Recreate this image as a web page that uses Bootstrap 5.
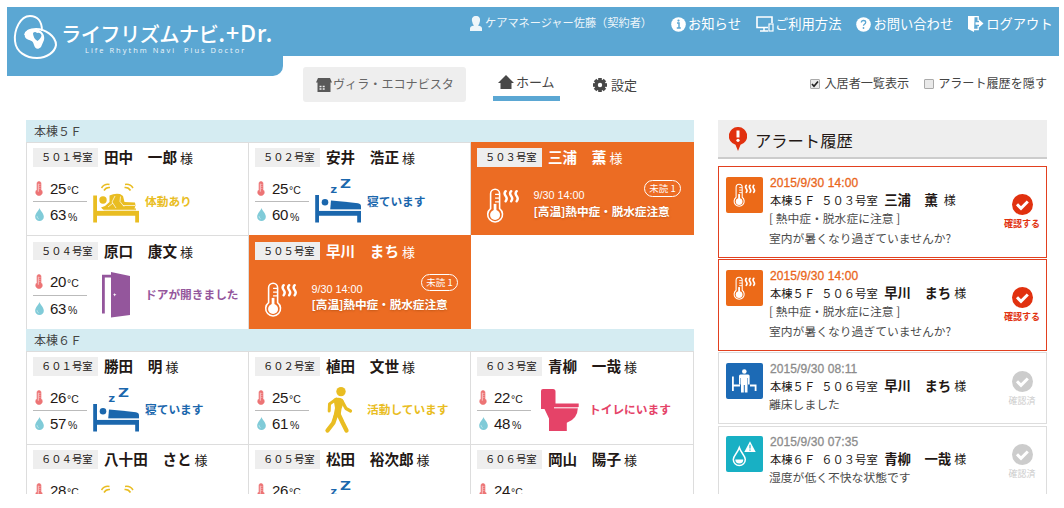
<!DOCTYPE html>
<html lang="ja">
<head>
<meta charset="utf-8">
<meta name="viewport" content="width=device-width, initial-scale=1">
<title>ライフリズムナビ.+Dr.</title>
<link href="https://cdn.jsdelivr.net/npm/bootstrap@5.3.0/dist/css/bootstrap.min.css" rel="stylesheet">
<style>
body{width:1064px;height:508px;font-family:"Noto Sans CJK JP",sans-serif;color:#231815;line-height:1;background:#fff}
svg{display:block;flex:none}
.num{font-family:"Liberation Sans",Arial,sans-serif}
.top-area{padding:7px 5px 0 7px;height:120px}
.brand-box{width:276px;height:69px;border-bottom-right-radius:10px;padding:7px 0 0 6px}
.blue{background:#5ba7d3;color:#fff}
.top-right{width:776px}
.bar-blue{height:49px;padding:0 0 0 187px;white-space:nowrap}
.bar-blue .item{font-size:13.3px;height:34px}
.bar-blue .user{font-size:11.2px;opacity:.9;height:32px}
.brand-text{padding-top:6px;margin-left:3px}
.brand-name{font-size:20.4px;font-weight:500;letter-spacing:-.75px;line-height:24px;white-space:nowrap}
.brand-latin{font-size:23px;letter-spacing:.9px}
.brand-sub{font-family:"Open Sans",sans-serif;font-size:7.5px;letter-spacing:2px;line-height:9px;padding:1px 0 0 24px;white-space:pre;opacity:.9}
.tabs-row{padding:11px 12px 0 20px;color:#444}
.villa{width:163px;height:35px;background:#eee;border-radius:3px;font-size:12.1px;color:#666;padding-left:13px}
.tab-home{width:67px;height:34px;border-bottom:5px solid #5ba7d3;margin-left:27px;font-size:13px;padding-left:5px}
.tab-set{margin-left:33px;font-size:13px;height:35px}
.opt{font-size:12.1px;height:33px}
.tick{width:10px;height:10px;border:1px solid #aaa;background:#e9e9e9;border-radius:1px}
.page-body{padding:0 17px 0 26px;height:374px;overflow:hidden}
.rooms{width:668px}
.floor{height:22.2px;background:#d5ecf2;font-size:12px;color:#444;padding:0 8px;line-height:22px;word-spacing:-1px}
.grid-rooms{display:grid;grid-template-columns:222px 222px 223px;grid-auto-rows:93.3px;border-left:1px solid #ddd;width:668px}
.room{border-right:1px solid #ddd;border-top:1px solid #ddd;padding:5.2px 0 0 6px}
.room-no{width:65px;height:18.5px;background:#eee;color:#231815;font-size:10.3px;padding-left:8px;line-height:18px}
.who{font-size:14.6px;font-weight:700;margin-left:6px;line-height:17px}
.sama{font-size:13px;margin-left:3px;line-height:19px}
.env{width:54px;margin-top:8px}
.env .val{height:26px;padding-left:2px}
.env .val+.val{border-top:1px solid #bbb}
.env b{font-weight:400;font-size:15px;letter-spacing:-.3px;margin-left:7px}
.env .val+.val b{margin-left:6px}
.env small{font-size:10.5px;padding-top:4px;margin-left:1px}
.env .val+.val small{margin-left:2px}
.state{height:50px;margin-top:9px}
.lab{font-size:11.7px;font-weight:700;white-space:nowrap;padding-bottom:2px}
.c-y{color:#e9bd22}.c-b{color:#1b67ad}.c-p{color:#94569c}.c-r{color:#e54368}
.hot{background:#ec6c23;border-color:#ec6c23;color:#fff}
.hot-body{padding:14px 12px 0 8.5px}
.hot-body svg{margin-top:7px}
.clock{font-size:10.8px;padding-top:9px}
.pill{border:1px solid #fff;border-radius:9px;width:37px;height:17px;font-size:9.5px;line-height:14px;margin-top:-1px}
.msg{font-size:11.7px;font-weight:700;text-shadow:0 1px 2px #a348108c;letter-spacing:-.1px;white-space:nowrap;padding-top:4px}
.logs{width:329px;margin-left:24px}
.logs-head{height:39px;background:#eee;border-bottom:2px solid #ccc;padding-left:11px;font-size:16.3px;margin-bottom:7px}
.log{height:71.5px;border:1px solid #ddd;margin-bottom:2px;padding:9.5px 6px 0 7px}
.log.new{height:91.5px;border-color:#e2401f;margin-bottom:1.5px}
.tile{width:37px;height:36px;border-radius:2px;color:#fff;flex:none}
.when{font-size:12px;letter-spacing:.1px;height:14px;line-height:13px;color:#8c8c8c;-webkit-text-stroke:.3px}
.new .when{color:#ea661b}
.place{font-size:11.3px;word-spacing:3.5px;line-height:17px;height:17px;white-space:nowrap}
.place b{font-size:13.4px;margin:0 3px 0 6.5px}
.place .sm{font-size:12px}
.note{font-size:11.8px;color:#4b4b4b;line-height:20px;white-space:nowrap;margin-left:-1px}
.ack{width:36px;font-size:9px;color:#ccc}
.new .ack{color:#e1310f;font-weight:700}
</style>
</head>
<body class="overflow-hidden">
<svg width="0" height="0" class="position-absolute">
<defs>
<symbol id="temp" viewBox="0 0 8 14"><path d="M2 2a2 2 0 0 1 4 0v6.2a3.3 3.3 0 1 1-4 0z" fill="#ed7475" stroke="#ed7475" stroke-width=".6"/><path d="M3.3 2.2v8M4.5 3h.8M4.5 5h.8M4.5 7h.8" stroke="#fff" stroke-width=".6"/></symbol>
<symbol id="drop" viewBox="0 0 8 12"><path d="M4 0C5 3 8 5 8 8a4 4 0 0 1-8 0C0 5 3 3 4 0z" fill="#80cbd8"/><path d="M1.7 7.5q0 2 1.6 2.5" stroke="#c3e7ed" fill="none" stroke-width=".8"/></symbol>
<symbol id="sleep" viewBox="0 0 58 50"><g fill="#1b67ad"><path d="M6.2 19H10v15.7h42v11.8h-3.8v-6.7H10v6.7H6.2z"/><circle cx="16" cy="26.3" r="3.3"/><path d="M22 24.6q14 1 27 2.6 3 .6 3 3v3.3H21.2z"/><text x="21.4" y="17.4" font-family="Open Sans,sans-serif" font-weight="700" font-size="11" textLength="6.5" lengthAdjust="spacingAndGlyphs">z</text><text x="31.3" y="12" font-family="Open Sans,sans-serif" font-weight="700" font-size="12" textLength="10.5" lengthAdjust="spacingAndGlyphs">Z</text></g><path d="M10 34.2h42" stroke="#fff"/></symbol>
<symbol id="move" viewBox="0 0 58 50"><g fill="#e9bd22"><path d="M6.2 19.5H10v15.2h42v11.8h-3.8v-6.7H10v6.7H6.2z"/><circle cx="16" cy="24" r="3.7"/><path d="M18 30l4.500-4V19.500q5-2.500 10.500-1.500l3 2 1.500 6 10.500.5.500 3-1 3H49v2H17l-3-3z"/></g><path d="M21 31l5-4M28 20l-3 6 4 6M33.500 20.500l-.5 5 4 5M36 29.500h12M10 34.200h42" stroke="#fff" stroke-width=".7" fill="none"/><path d="M14.500 12q3-4.500 8-3.500M17 14.500q2-3.500 6-3M46 12q-3-4.500-8-3.500M43.500 14.500q-2-3.500-6-3" stroke="#e9bd22" stroke-width="1.600" fill="none"/></symbol>
<symbol id="door" viewBox="0 0 58 50"><path d="M15 4.700h9v2.800h-6.200v36H15zM24 2l19 4v39l-19 2.500z" fill="#94569c"/><path d="M27.700 23l.5 1.300 1.300.5-1.300.5-.5 1.300-.5-1.300-1.300-.5 1.300-.5z" fill="#fff"/></symbol>
<symbol id="walk" viewBox="0 0 58 50"><g fill="none" stroke="#e9bd22" stroke-linecap="round" stroke-linejoin="round"><path d="M27.500 14L20.500 19 20.200 26" stroke-width="3"/><path d="M33 16l4 7.500 4.500 2.500" stroke-width="3.200"/><path d="M26.500 31.500L24.300 38 18.500 45.500" stroke-width="4.300"/><path d="M29.500 29l4 8.500 4 8" stroke-width="4.300"/></g><circle cx="32" cy="6.600" r="4.700" fill="#e9bd22"/><path d="M24.500 14q5-2.500 9 0l1.500 3-2.500 7-1.200 8.500-7-.5 1.700-9z" fill="#e9bd22"/></symbol>
<symbol id="toilet" viewBox="0 0 58 50"><path d="M10 6q0-2 2-2h10q2.500 0 2.500 2.500v12h23.200v3.800H47q-.5 12-11.200 15.500V46H18V33.500L13.500 24H10z" fill="#e54368"/><path d="M23 22.800h25" stroke="#fff" stroke-width="1"/></symbol>
<symbol id="heat" viewBox="0 0 32 34"><g fill="none" stroke="currentColor"><path d="M4.300 19.500V5.500a4 4 0 0 1 8.500 0v14a7 7 0 1 1-8.500 0z" stroke-width="1.500"/><path d="M12.500 6H8.500M12.500 9.500H8.500M12.500 13H8.500" stroke-width="1.200"/><path d="M8.500 15v10" stroke-width="2.600"/><g stroke-width="2.300" stroke-linecap="round"><path d="M18.500 3q-2 2 0 4.500t0 5M23.700 3q-2 2 0 4.500t0 5M28.900 3q-2 2 0 4.500t0 5"/></g></g><circle cx="8.500" cy="25.500" r="4.700" fill="currentColor"/></symbol>
<symbol id="check" viewBox="0 0 21 21"><circle cx="10.500" cy="10.500" r="10.500" fill="currentColor"/><path d="M5 10.300l4 4L15.800 7.500" stroke="#fff" stroke-width="3" fill="none"/></symbol>
</defs>
</svg>

<header class="top-area d-flex">
  <div class="brand-box blue d-flex">
    <svg width="45" height="46" viewBox="0 0 45 46" fill="none" stroke="#fff" stroke-width="2"><path d="M29 17C29 7 24 2 17 2 7 2 1 16 2 27c1 11 11 17 22 17 10 0 18-6 19-13 0-9-11-16-20-16-6 0-10 2-11 6"/><path d="M12 20c1-5 8-6 14-4 4 2 6 6 5 10l-3 7c-3 3-6 2-7-2-1-4-2-4-5-5-3-1-5-3-4-6z" fill="#fff" stroke="none"/><path d="M20 19q2-2 4 0 3-1 4.500 2 0 3-4 6-4.500-3-4.500-8z" fill="#5ba7d3" stroke="none"/></svg>
    <div class="brand-text">
      <div class="brand-name">ライフリズムナビ<span class="brand-latin">.+Dr.</span></div>
      <div class="brand-sub">Life Rhythm Navi  Plus Doctor</div>
    </div>
  </div>
  <div class="top-right">
    <nav class="bar-blue blue d-flex">
      <div class="user d-flex align-items-center"><svg width="12" height="15" viewBox="0 0 12 15" fill="#fff"><path d="M6 0c3 0 4.500 2 4 5q-.5 3-2 4.500 4 .5 4 3V15H0v-2.500q0-2.500 4-3Q2.500 8 2 5C1.500 2 3 0 6 0z"/></svg><span style="padding-left:3px">ケアマネージャー佐藤（契約者）</span></div>
      <div class="item d-flex align-items-center" style="margin-left:19px"><svg width="15" height="15" viewBox="0 0 15 15"><circle cx="7.500" cy="7.500" r="7.300" fill="#fff"/><path d="M6 6h2v5M5.800 11h4" stroke="#5ba7d3" stroke-width="1.500" fill="none"/><circle cx="7.500" cy="3.600" r="1.100" fill="#5ba7d3"/></svg><span style="margin-left:2px">お知らせ</span></div>
      <div class="item d-flex align-items-center" style="margin-left:15px"><svg width="18" height="16" viewBox="0 0 18 16" fill="none" stroke="#fff"><path d="M12 11.500H1V1h15v6" stroke-width="1.600"/><path d="M8 12v2.500M4 15h8" stroke-width="1.500"/><rect x="13" y="8" width="4" height="7" stroke-width="1.200"/></svg><span style="margin-left:1px">ご利用方法</span></div>
      <div class="item d-flex align-items-center" style="margin-left:15px"><svg width="15" height="15" viewBox="0 0 15 15"><circle cx="7.500" cy="7.500" r="7.300" fill="#fff"/><path d="M5.300 5.500q.2-2 2.200-2 2.200 0 2.200 1.800 0 1.200-1.300 1.900-.9.600-.9 1.600" stroke="#5ba7d3" stroke-width="1.300" fill="none"/><circle cx="7.500" cy="11" r=".9" fill="#5ba7d3"/></svg><span style="margin-left:2px">お問い合わせ</span></div>
      <div class="item d-flex align-items-center" style="margin-left:15px"><svg width="16" height="16" viewBox="0 0 16 16"><path d="M0 0h6.500v3L6 16 0 13z" fill="#fff"/><path d="M3 .7h7.200V5M6 13.500h4.200V10" fill="none" stroke="#fff" stroke-width="1.300"/><path d="M7.500 6.300h3.500V3.500L15.500 7.500 11 11.500V8.700H7.500z" fill="#fff"/></svg><span style="margin-left:2px">ログアウト</span></div>
    </nav>
    <div class="tabs-row d-flex">
      <div class="villa d-flex align-items-center"><svg width="16" height="14" viewBox="0 0 16 14" fill="#595959"><path d="M2 0h12l2 4.500H0zM1.500 4.500h13V14h-13z"/><path d="M3.500 8.500h2M6.700 8.500h2M3.500 11h2M6.700 11h2" stroke="#eee" stroke-width="1.300"/></svg><span style="margin-left:1px">ヴィラ・エコナビスタ</span></div>
      <div class="tab-home d-flex align-items-center"><svg width="16" height="14" viewBox="0 0 16 14" fill="#484848"><path d="M8 0l8 8h-2.500v6h-11V8H0z"/></svg><span style="margin-left:2px">ホーム</span></div>
      <div class="tab-set d-flex align-items-center"><svg width="14" height="14" viewBox="-7 -7 14 14"><g fill="#484848"><circle r="5.600"/><path id="tooth" d="M-1.800-7h3.600v14h-3.600z"/><use href="#tooth" transform="rotate(45)"/><use href="#tooth" transform="rotate(90)"/><use href="#tooth" transform="rotate(135)"/></g><circle r="2.200" fill="#fff"/></svg><span style="margin-left:4px">設定</span></div>
      <div class="opt d-flex align-items-center ms-auto"><span class="tick"><svg width="8" height="8" viewBox="0 0 8 8"><path d="M1 4l2 2.300L7 1.500" stroke="#222" stroke-width="1.700" fill="none"/></svg></span><span class="ms-1">入居者一覧表示</span></div>
      <div class="opt d-flex align-items-center" style="margin-left:15px"><span class="tick"></span><span class="ms-1">アラート履歴を隠す</span></div>
    </div>
  </div>
</header>

<main class="page-body d-flex">
  <section class="rooms">
    <div class="floor">本棟５Ｆ</div>
    <div class="grid-rooms">
      <div class="room">
        <div class="d-flex"><span class="room-no">５０１号室</span><span class="who">田中　一郎</span><span class="sama">様</span></div>
        <div class="d-flex"><div class="env"><div class="val d-flex align-items-center"><svg width="8" height="15"><use href="#temp"/></svg><b class="num">25</b><small class="num">°C</small></div><div class="val d-flex align-items-center"><svg width="9" height="13"><use href="#drop"/></svg><b class="num">63</b><small class="num">%</small></div></div><div class="state d-flex align-items-center c-y"><svg width="58" height="50"><use href="#move"/></svg><span class="lab">体動あり</span></div></div>
      </div>
      <div class="room">
        <div class="d-flex"><span class="room-no">５０２号室</span><span class="who">安井　浩正</span><span class="sama">様</span></div>
        <div class="d-flex"><div class="env"><div class="val d-flex align-items-center"><svg width="8" height="15"><use href="#temp"/></svg><b class="num">25</b><small class="num">°C</small></div><div class="val d-flex align-items-center"><svg width="9" height="13"><use href="#drop"/></svg><b class="num">60</b><small class="num">%</small></div></div><div class="state d-flex align-items-center c-b"><svg width="58" height="50"><use href="#sleep"/></svg><span class="lab">寝ています</span></div></div>
      </div>
      <div class="room hot">
        <div class="d-flex"><span class="room-no">５０３号室</span><span class="who">三浦　薫</span><span class="sama">様</span></div>
        <div class="hot-body d-flex"><svg width="34" height="36" viewBox="0 0 32 34"><use href="#heat"/></svg><div class="flex-grow-1" style="margin-left:14px"><div class="d-flex align-items-start justify-content-between"><span class="num clock">9/30 14:00</span><span class="pill text-center">未読 1</span></div><div class="msg">[高温]熱中症・脱水症注意</div></div></div>
      </div>
      <div class="room">
        <div class="d-flex"><span class="room-no">５０４号室</span><span class="who">原口　康文</span><span class="sama">様</span></div>
        <div class="d-flex"><div class="env"><div class="val d-flex align-items-center"><svg width="8" height="15"><use href="#temp"/></svg><b class="num">20</b><small class="num">°C</small></div><div class="val d-flex align-items-center"><svg width="9" height="13"><use href="#drop"/></svg><b class="num">63</b><small class="num">%</small></div></div><div class="state d-flex align-items-center c-p"><svg width="58" height="50"><use href="#door"/></svg><span class="lab">ドアが開きました</span></div></div>
      </div>
      <div class="room hot">
        <div class="d-flex"><span class="room-no">５０５号室</span><span class="who">早川　まち</span><span class="sama">様</span></div>
        <div class="hot-body d-flex"><svg width="34" height="36" viewBox="0 0 32 34"><use href="#heat"/></svg><div class="flex-grow-1" style="margin-left:14px"><div class="d-flex align-items-start justify-content-between"><span class="num clock">9/30 14:00</span><span class="pill text-center">未読 1</span></div><div class="msg">[高温]熱中症・脱水症注意</div></div></div>
      </div>
    </div>
    <div class="floor">本棟６Ｆ</div>
    <div class="grid-rooms">
      <div class="room">
        <div class="d-flex"><span class="room-no">６０１号室</span><span class="who">勝田　明</span><span class="sama">様</span></div>
        <div class="d-flex"><div class="env"><div class="val d-flex align-items-center"><svg width="8" height="15"><use href="#temp"/></svg><b class="num">26</b><small class="num">°C</small></div><div class="val d-flex align-items-center"><svg width="9" height="13"><use href="#drop"/></svg><b class="num">57</b><small class="num">%</small></div></div><div class="state d-flex align-items-center c-b"><svg width="58" height="50"><use href="#sleep"/></svg><span class="lab">寝ています</span></div></div>
      </div>
      <div class="room">
        <div class="d-flex"><span class="room-no">６０２号室</span><span class="who">植田　文世</span><span class="sama">様</span></div>
        <div class="d-flex"><div class="env"><div class="val d-flex align-items-center"><svg width="8" height="15"><use href="#temp"/></svg><b class="num">25</b><small class="num">°C</small></div><div class="val d-flex align-items-center"><svg width="9" height="13"><use href="#drop"/></svg><b class="num">61</b><small class="num">%</small></div></div><div class="state d-flex align-items-center c-y"><svg width="58" height="50"><use href="#walk"/></svg><span class="lab">活動しています</span></div></div>
      </div>
      <div class="room">
        <div class="d-flex"><span class="room-no">６０３号室</span><span class="who">青柳　一哉</span><span class="sama">様</span></div>
        <div class="d-flex"><div class="env"><div class="val d-flex align-items-center"><svg width="8" height="15"><use href="#temp"/></svg><b class="num">22</b><small class="num">°C</small></div><div class="val d-flex align-items-center"><svg width="9" height="13"><use href="#drop"/></svg><b class="num">48</b><small class="num">%</small></div></div><div class="state d-flex align-items-center c-r"><svg width="58" height="50"><use href="#toilet"/></svg><span class="lab">トイレにいます</span></div></div>
      </div>
      <div class="room">
        <div class="d-flex"><span class="room-no">６０４号室</span><span class="who">八十田　さと</span><span class="sama">様</span></div>
        <div class="d-flex"><div class="env"><div class="val d-flex align-items-center"><svg width="8" height="15"><use href="#temp"/></svg><b class="num">28</b><small class="num">°C</small></div></div><div class="state d-flex align-items-center"><svg width="58" height="50"><use href="#move"/></svg></div></div>
      </div>
      <div class="room">
        <div class="d-flex"><span class="room-no">６０５号室</span><span class="who">松田　裕次郎</span><span class="sama">様</span></div>
        <div class="d-flex"><div class="env"><div class="val d-flex align-items-center"><svg width="8" height="15"><use href="#temp"/></svg><b class="num">26</b><small class="num">°C</small></div></div><div class="state d-flex align-items-center"><svg width="58" height="50"><use href="#sleep"/></svg></div></div>
      </div>
      <div class="room">
        <div class="d-flex"><span class="room-no">６０６号室</span><span class="who">岡山　陽子</span><span class="sama">様</span></div>
        <div class="d-flex"><div class="env"><div class="val d-flex align-items-center"><svg width="8" height="15"><use href="#temp"/></svg><b class="num">24</b><small class="num">°C</small></div></div></div>
      </div>
    </div>
  </section>

  <aside class="logs">
    <div class="logs-head d-flex align-items-center"><svg width="18" height="24" viewBox="0 0 18 24"><path d="M9 0a9 9 0 0 1 2.500 17.700L9 24 6.500 17.700A9 9 0 0 1 9 0z" fill="#e1310f"/><path d="M9 3.500v7" stroke="#fff" stroke-width="3"/><circle cx="9" cy="13.300" r="1.600" fill="#fff"/></svg><span class="ps-2 pt-1">アラート履歴</span></div>
    <div class="log new d-flex">
      <div class="tile" style="background:#ec6a18"><svg width="37" height="36" viewBox="0 0 37 36"><use href="#heat" x="7" y="6" width="23" height="25"/></svg></div>
      <div class="flex-grow-1" style="margin-left:7px"><div class="when num">2015/9/30 14:00</div><div class="place">本棟５Ｆ ５０３号室<b>三浦　薫</b><span class="sm" style="margin-left:3px">様</span></div><div class="note">[ 熱中症・脱水症に注意 ]<br>室内が暑くなり過ぎていませんか?</div></div>
      <div class="ack d-flex flex-column align-items-center" style="padding-top:17px"><svg width="21" height="21"><use href="#check"/></svg><span class="mt-1 text-nowrap">確認する</span></div>
    </div>
    <div class="log new d-flex">
      <div class="tile" style="background:#ec6a18"><svg width="37" height="36" viewBox="0 0 37 36"><use href="#heat" x="7" y="6" width="23" height="25"/></svg></div>
      <div class="flex-grow-1" style="margin-left:7px"><div class="when num">2015/9/30 14:00</div><div class="place">本棟５Ｆ ５０６号室<b>早川　まち</b><span class="sm">様</span></div><div class="note">[ 熱中症・脱水症に注意 ]<br>室内が暑くなり過ぎていませんか?</div></div>
      <div class="ack d-flex flex-column align-items-center" style="padding-top:17px"><svg width="21" height="21"><use href="#check"/></svg><span class="mt-1 text-nowrap">確認する</span></div>
    </div>
    <div class="log d-flex">
      <div class="tile" style="background:#1c6ab5"><svg width="37" height="36" viewBox="0 0 37 36" fill="#fff"><path d="M6 13.500h1.800v8H14v2H7.800V28H6zM24 21.500h6.500V28h-1.800v-4.500H24z"/><circle cx="18.300" cy="8.500" r="2.300"/><path d="M14.500 11.500h7.600q1.500 0 1.500 1.500v8.500H22V15h-.5v14.500h-2.700V22h-1v7.500H15V15h-.5v6.500H13V13q0-1.500 1.500-1.500z"/></svg></div>
      <div class="flex-grow-1" style="margin-left:7px"><div class="when num">2015/9/30 08:11</div><div class="place">本棟５Ｆ ５０６号室<b>早川　まち</b><span class="sm">様</span></div><div class="note">離床しました</div></div>
      <div class="ack d-flex flex-column align-items-center" style="padding-top:8px"><svg width="21" height="21"><use href="#check"/></svg><span class="mt-1">確認済</span></div>
    </div>
    <div class="log d-flex" style="height:100px">
      <div class="tile" style="background:#18b0c4"><svg width="37" height="36" viewBox="0 0 37 36"><path d="M13.300 11.500q1 3 3.500 6.500 2.500 3.500 2.500 5.500a6 6 0 0 1-12 0q0-2 2.500-5.500 2.500-3.500 3.500-6.500z" fill="none" stroke="#fff" stroke-width="1.500"/><path d="M9.300 23.500h8a4 4 0 0 1-8 0zM24 5.300L29.700 16H18.300z" fill="#fff"/><path d="M24 8.800v3.700M24 13.500v1.300" stroke="#18b0c4" stroke-width="1.200"/></svg></div>
      <div class="flex-grow-1" style="margin-left:7px"><div class="when num">2015/9/30 07:35</div><div class="place">本棟６Ｆ ６０３号室<b>青柳　一哉</b><span class="sm">様</span></div><div class="note">湿度が低く不快な状態です</div></div>
      <div class="ack d-flex flex-column align-items-center" style="padding-top:8px"><svg width="21" height="21"><use href="#check"/></svg><span class="mt-1">確認済</span></div>
    </div>
  </aside>
</main>
<script src="https://cdn.jsdelivr.net/npm/bootstrap@5.3.0/dist/js/bootstrap.bundle.min.js"></script>
</body>
</html>
